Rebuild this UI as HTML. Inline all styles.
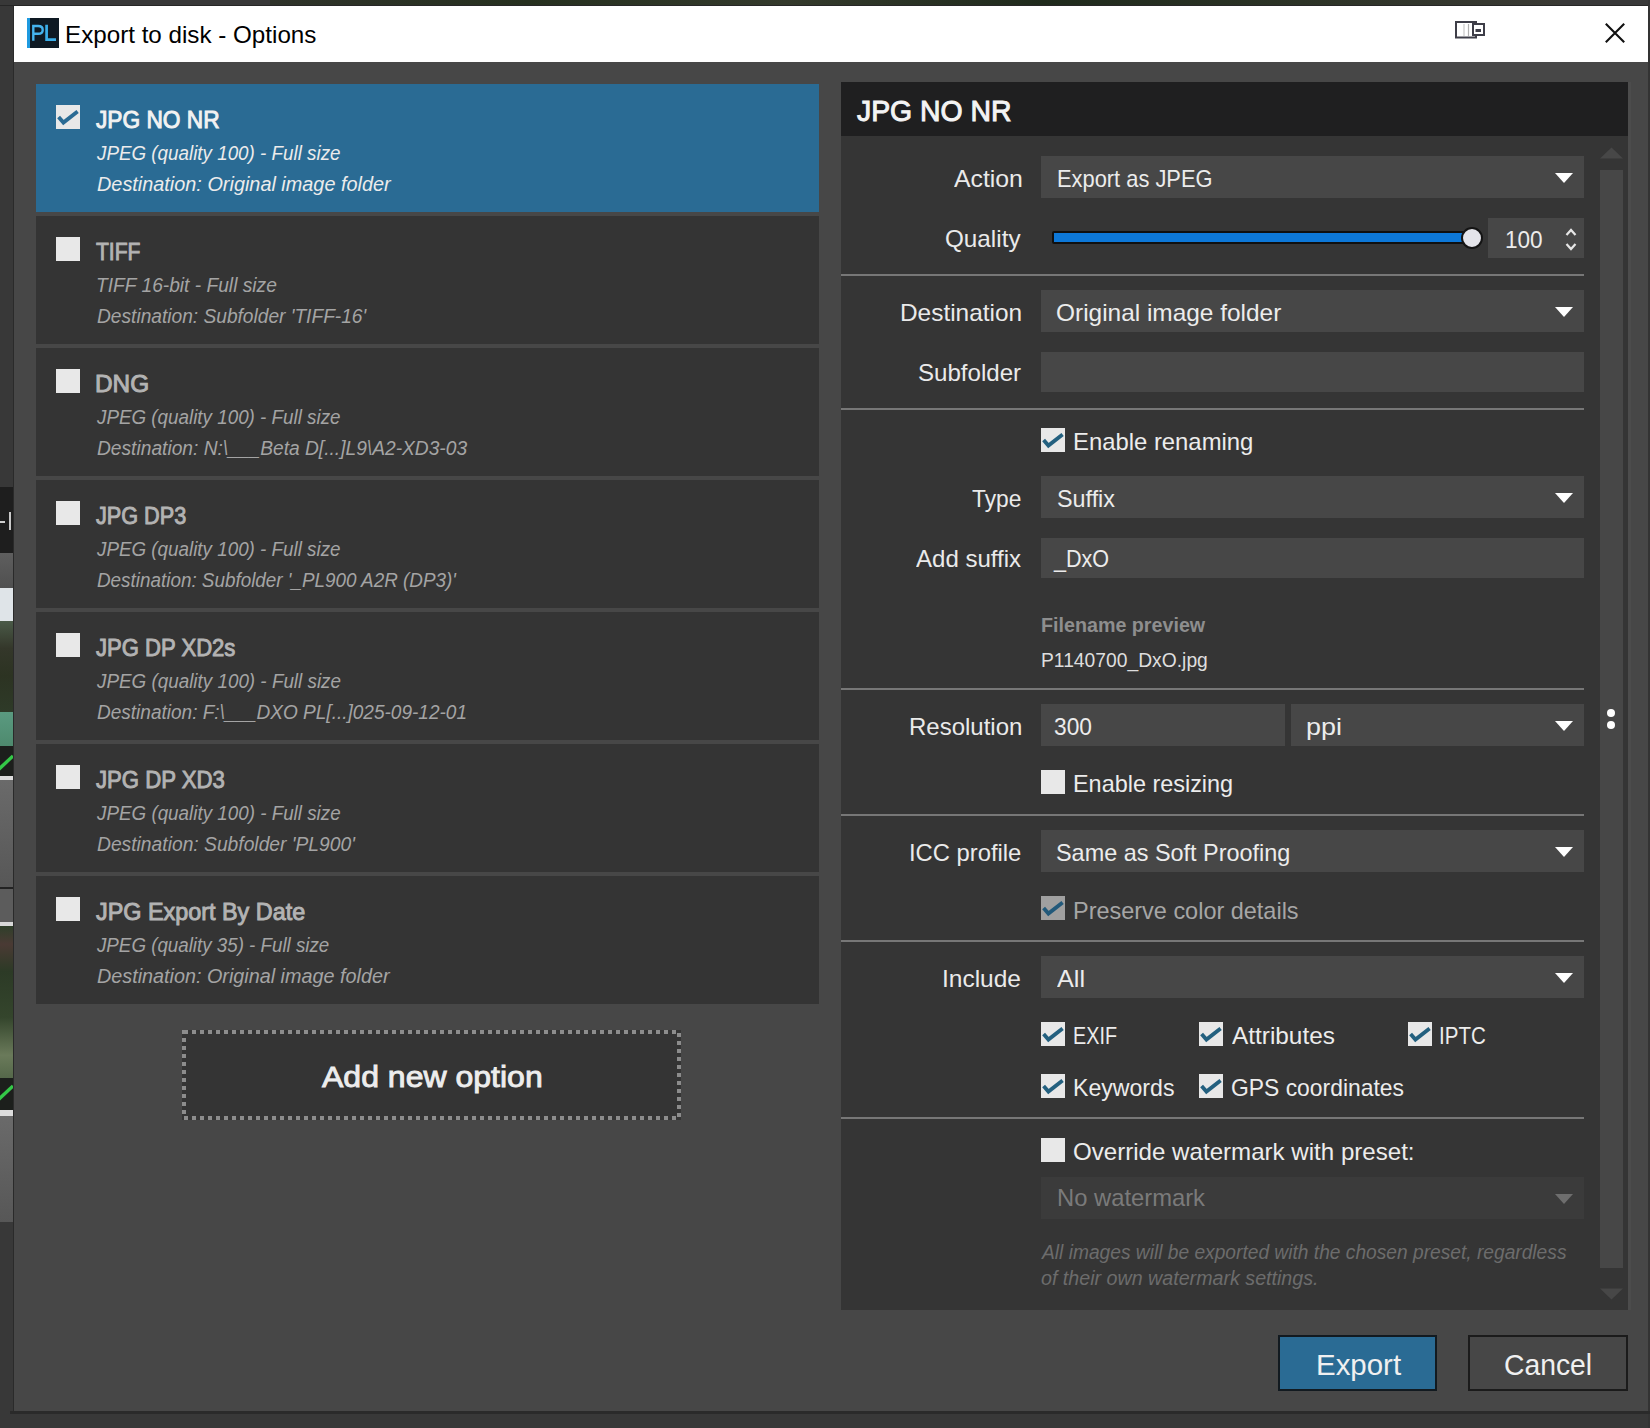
<!DOCTYPE html>
<html><head><meta charset="utf-8"><style>
*{margin:0;padding:0;box-sizing:border-box}
html,body{width:1650px;height:1428px;overflow:hidden;background:#353535;font-family:"Liberation Sans",sans-serif}
.a{position:absolute}
.t{position:absolute;white-space:nowrap;transform-origin:0 0}
</style></head><body>
<div class="a" style="left:0px;top:0px;width:1650px;height:1428px;background:#383838;"></div>
<div class="a" style="left:270px;top:0px;width:1290px;height:6px;background:linear-gradient(90deg,#2f332a,#26301f 20%,#343a2c 40%,#1f2a1c 60%,#2c3326 80%,#3a3a34);"></div>
<div class="a" style="left:0px;top:5px;width:1650px;height:1px;background:#262626;"></div>
<div class="a" style="left:0px;top:487px;width:13px;height:66px;background:#1e1e1e;"></div>
<div class="a" style="left:0px;top:521px;width:5px;height:2px;background:#d0d0d0;"></div>
<div class="a" style="left:9px;top:512px;width:2px;height:18px;background:#c8c8c8;"></div>
<div class="a" style="left:0px;top:553px;width:13px;height:35px;background:linear-gradient(180deg,#5e5e5e,#505050);"></div>
<div class="a" style="left:0px;top:588px;width:13px;height:33px;background:#dfe4e8;"></div>
<div class="a" style="left:0px;top:621px;width:13px;height:91px;background:linear-gradient(180deg,#4a5a48,#34372a 30%,#2c3322 60%,#2e3a28);"></div>
<div class="a" style="left:0px;top:712px;width:13px;height:34px;background:linear-gradient(180deg,#5a9a80,#4e8a6e);"></div>
<div class="a" style="left:0px;top:746px;width:13px;height:30px;background:#1c1f1c;"></div>
<svg class="a" style="left:0;top:746px" width="13" height="30" viewBox="0 0 13 30"><path d="M-2 24 L13 10" stroke="#34c848" stroke-width="3.4" fill="none"/></svg>
<div class="a" style="left:0px;top:776px;width:13px;height:4px;background:#dcdcdc;"></div>
<div class="a" style="left:0px;top:780px;width:13px;height:107px;background:linear-gradient(180deg,#6a6a6a,#575757);"></div>
<div class="a" style="left:0px;top:887px;width:13px;height:2px;background:#222;"></div>
<div class="a" style="left:0px;top:889px;width:13px;height:33px;background:#5c5c5c;"></div>
<div class="a" style="left:0px;top:922px;width:13px;height:4px;background:#d8d8d8;"></div>
<div class="a" style="left:0px;top:926px;width:13px;height:152px;background:linear-gradient(180deg,#2f3f2a,#4a3a34 12%,#2c3a26 30%,#34452c 60%,#6a7a5a 85%,#55684a);"></div>
<div class="a" style="left:0px;top:1078px;width:13px;height:32px;background:#1c1f1c;"></div>
<svg class="a" style="left:0;top:1078px" width="13" height="32" viewBox="0 0 13 32"><path d="M-2 22 L13 8" stroke="#34c848" stroke-width="3.4" fill="none"/></svg>
<div class="a" style="left:0px;top:1110px;width:13px;height:6px;background:#dcdcdc;"></div>
<div class="a" style="left:0px;top:1116px;width:13px;height:106px;background:linear-gradient(180deg,#6a6a6a,#575757);"></div>
<div class="a" style="left:1648px;top:0px;width:2px;height:1428px;background:#333333;"></div>
<div class="a" style="left:13px;top:6px;width:1px;height:1407px;background:#2a2a2a;"></div>
<div class="a" style="left:10px;top:1411px;width:1640px;height:3px;background:#2a2a2a;"></div>
<div class="a" style="left:14px;top:6px;width:1634px;height:56px;background:#ffffff;"></div>
<div class="a" style="left:14px;top:62px;width:1634px;height:1349px;background:#474747;"></div>
<div class="a" style="left:27px;top:18px;width:32px;height:30px;background:#0e1923"></div>
<div class="a" style="left:27px;top:18px;width:3px;height:30px;background:#1e9ae0"></div>
<svg class="a" style="left:27px;top:18px" width="32" height="30" viewBox="0 0 32 30">
<path d="M6.3 22.8 V8 H11.2 Q15.7 8 15.7 11.9 Q15.7 15.8 11.2 15.8 H6.3" fill="none" stroke="#45b3ee" stroke-width="2.4"/>
<path d="M19.6 6.8 V21.7 H29" fill="none" stroke="#3aaeea" stroke-width="2.7"/>
</svg>
<svg class="a" style="left:1450px;top:16px" width="40" height="26" viewBox="0 0 40 26">
<rect x="6" y="6" width="20" height="15.5" fill="#fff" stroke="#3e3e48" stroke-width="2"/>
<line x1="14" y1="8" x2="14" y2="20" stroke="#c8c8c8" stroke-width="1.2"/>
<line x1="18.5" y1="8" x2="18.5" y2="20" stroke="#b0b0b0" stroke-width="1.2"/>
<rect x="23" y="8" width="11" height="11" fill="#fff" stroke="#3e3e48" stroke-width="2"/>
<rect x="25.5" y="13" width="5.5" height="3" fill="#3e3e48"/>
</svg>
<svg class="a" style="left:1600px;top:18px" width="30" height="30" viewBox="0 0 30 30">
<path d="M5.8 5.8 L24.2 24.2 M24.2 5.8 L5.8 24.2" stroke="#111" stroke-width="2.1" fill="none"/>
</svg>
<div class="a" style="left:36px;top:84px;width:783px;height:128px;background:#2a6b94;"></div>
<div class="a" style="left:56px;top:105px;width:24px;height:24px;background:#e8e8e8"></div><svg class="a" style="left:56px;top:105px" width="24" height="24" viewBox="0 0 24 24"><path d="M2.6 12.1 L7.4 17.6 L21.6 6.4" fill="none" stroke="#2a6b94" stroke-width="3.8" stroke-linejoin="miter"/></svg>
<div class="a" style="left:36px;top:216px;width:783px;height:128px;background:#343434;"></div>
<div class="a" style="left:56px;top:237px;width:24px;height:24px;background:#e8e8e8"></div>
<div class="a" style="left:36px;top:348px;width:783px;height:128px;background:#343434;"></div>
<div class="a" style="left:56px;top:369px;width:24px;height:24px;background:#e8e8e8"></div>
<div class="a" style="left:36px;top:480px;width:783px;height:128px;background:#343434;"></div>
<div class="a" style="left:56px;top:501px;width:24px;height:24px;background:#e8e8e8"></div>
<div class="a" style="left:36px;top:612px;width:783px;height:128px;background:#343434;"></div>
<div class="a" style="left:56px;top:633px;width:24px;height:24px;background:#e8e8e8"></div>
<div class="a" style="left:36px;top:744px;width:783px;height:128px;background:#343434;"></div>
<div class="a" style="left:56px;top:765px;width:24px;height:24px;background:#e8e8e8"></div>
<div class="a" style="left:36px;top:876px;width:783px;height:128px;background:#343434;"></div>
<div class="a" style="left:56px;top:897px;width:24px;height:24px;background:#e8e8e8"></div>
<div class="a" style="left:182px;top:1030px;width:499px;height:90px;background:#343434"></div>
<svg class="a" style="left:182px;top:1030px" width="499" height="90" viewBox="0 0 499 90">
<rect x="2" y="2" width="495" height="86" fill="none" stroke="#8c8c8c" stroke-width="4" stroke-dasharray="4 4"/>
</svg>
<div class="a" style="left:841px;top:82px;width:787px;height:1228px;background:#353535;"></div>
<div class="a" style="left:841px;top:82px;width:787px;height:54px;background:#1f1f20;"></div>
<div class="a" style="left:1628px;top:82px;width:3px;height:1228px;background:#4c4c4c;"></div>
<div class="a" style="left:1041px;top:156px;width:543px;height:42px;background:#474747;"></div>
<svg class="a" style="left:1554px;top:172.0px" width="20" height="11" viewBox="0 0 20 11"><path d="M1 1 H19 L10 11 Z" fill="#ffffff"/></svg>
<div class="a" style="left:1052px;top:231px;width:422px;height:13px;background:#101010;border-radius:2px"></div>
<div class="a" style="left:1054px;top:233px;width:418px;height:9px;background:#0d78d8;"></div>
<div class="a" style="left:1461.2px;top:226.5px;width:22px;height:22px;border-radius:50%;background:#e4e4ea;border:2px solid #141414"></div>
<div class="a" style="left:1488px;top:218px;width:96px;height:40px;background:#474747;"></div>
<svg class="a" style="left:1564px;top:226px" width="14" height="28" viewBox="0 0 14 28">
<path d="M2.5 9 L7 4 L11.5 9" fill="none" stroke="#e6e6e6" stroke-width="2.2"/>
<path d="M2.5 18 L7 23 L11.5 18" fill="none" stroke="#e6e6e6" stroke-width="2.2"/>
</svg>
<div class="a" style="left:841px;top:274px;width:743px;height:2px;background:#777777;"></div>
<div class="a" style="left:1041px;top:290px;width:543px;height:42px;background:#474747;"></div>
<svg class="a" style="left:1554px;top:306.0px" width="20" height="11" viewBox="0 0 20 11"><path d="M1 1 H19 L10 11 Z" fill="#ffffff"/></svg>
<div class="a" style="left:1041px;top:352px;width:543px;height:40px;background:#474747;"></div>
<div class="a" style="left:841px;top:408px;width:743px;height:2px;background:#777777;"></div>
<div class="a" style="left:1041px;top:428px;width:24px;height:24px;background:#e8e8e8"></div><svg class="a" style="left:1041px;top:428px" width="24" height="24" viewBox="0 0 24 24"><path d="M2.6 12.1 L7.4 17.6 L21.6 6.4" fill="none" stroke="#23607f" stroke-width="3.8" stroke-linejoin="miter"/></svg>
<div class="a" style="left:1041px;top:476px;width:543px;height:42px;background:#474747;"></div>
<svg class="a" style="left:1554px;top:492.0px" width="20" height="11" viewBox="0 0 20 11"><path d="M1 1 H19 L10 11 Z" fill="#ffffff"/></svg>
<div class="a" style="left:1041px;top:538px;width:543px;height:40px;background:#474747;"></div>
<div class="a" style="left:841px;top:688px;width:743px;height:2px;background:#777777;"></div>
<div class="a" style="left:1041px;top:704px;width:244px;height:42px;background:#474747;"></div>
<div class="a" style="left:1291px;top:704px;width:293px;height:42px;background:#474747;"></div>
<svg class="a" style="left:1554px;top:720.0px" width="20" height="11" viewBox="0 0 20 11"><path d="M1 1 H19 L10 11 Z" fill="#ffffff"/></svg>
<div class="a" style="left:1041px;top:770px;width:24px;height:24px;background:#e8e8e8"></div>
<div class="a" style="left:841px;top:814px;width:743px;height:2px;background:#777777;"></div>
<div class="a" style="left:1041px;top:830px;width:543px;height:42px;background:#474747;"></div>
<svg class="a" style="left:1554px;top:846.0px" width="20" height="11" viewBox="0 0 20 11"><path d="M1 1 H19 L10 11 Z" fill="#ffffff"/></svg>
<div class="a" style="left:1041px;top:896px;width:24px;height:24px;background:#a0a0a0"></div><svg class="a" style="left:1041px;top:896px" width="24" height="24" viewBox="0 0 24 24"><path d="M2.6 12.1 L7.4 17.6 L21.6 6.4" fill="none" stroke="#22597a" stroke-width="3.8" stroke-linejoin="miter"/></svg>
<div class="a" style="left:841px;top:940px;width:743px;height:2px;background:#777777;"></div>
<div class="a" style="left:1041px;top:956px;width:543px;height:42px;background:#474747;"></div>
<svg class="a" style="left:1554px;top:972.0px" width="20" height="11" viewBox="0 0 20 11"><path d="M1 1 H19 L10 11 Z" fill="#ffffff"/></svg>
<div class="a" style="left:1041px;top:1022px;width:24px;height:24px;background:#e8e8e8"></div><svg class="a" style="left:1041px;top:1022px" width="24" height="24" viewBox="0 0 24 24"><path d="M2.6 12.1 L7.4 17.6 L21.6 6.4" fill="none" stroke="#23607f" stroke-width="3.8" stroke-linejoin="miter"/></svg>
<div class="a" style="left:1199px;top:1022px;width:24px;height:24px;background:#e8e8e8"></div><svg class="a" style="left:1199px;top:1022px" width="24" height="24" viewBox="0 0 24 24"><path d="M2.6 12.1 L7.4 17.6 L21.6 6.4" fill="none" stroke="#23607f" stroke-width="3.8" stroke-linejoin="miter"/></svg>
<div class="a" style="left:1408px;top:1022px;width:24px;height:24px;background:#e8e8e8"></div><svg class="a" style="left:1408px;top:1022px" width="24" height="24" viewBox="0 0 24 24"><path d="M2.6 12.1 L7.4 17.6 L21.6 6.4" fill="none" stroke="#23607f" stroke-width="3.8" stroke-linejoin="miter"/></svg>
<div class="a" style="left:1041px;top:1074px;width:24px;height:24px;background:#e8e8e8"></div><svg class="a" style="left:1041px;top:1074px" width="24" height="24" viewBox="0 0 24 24"><path d="M2.6 12.1 L7.4 17.6 L21.6 6.4" fill="none" stroke="#23607f" stroke-width="3.8" stroke-linejoin="miter"/></svg>
<div class="a" style="left:1199px;top:1074px;width:24px;height:24px;background:#e8e8e8"></div><svg class="a" style="left:1199px;top:1074px" width="24" height="24" viewBox="0 0 24 24"><path d="M2.6 12.1 L7.4 17.6 L21.6 6.4" fill="none" stroke="#23607f" stroke-width="3.8" stroke-linejoin="miter"/></svg>
<div class="a" style="left:841px;top:1117px;width:743px;height:2px;background:#777777;"></div>
<div class="a" style="left:1041px;top:1138px;width:24px;height:24px;background:#e8e8e8"></div>
<div class="a" style="left:1041px;top:1177px;width:543px;height:42px;background:#3b3b3b;"></div>
<svg class="a" style="left:1554px;top:1193.0px" width="20" height="11" viewBox="0 0 20 11"><path d="M1 1 H19 L10 11 Z" fill="#6e6e6e"/></svg>
<svg class="a" style="left:1600px;top:147px" width="23" height="12" viewBox="0 0 23 12"><path d="M0 11.5 L11.5 0.5 L23 11.5 Z" fill="#474747"/></svg>
<div class="a" style="left:1600px;top:170px;width:23px;height:1098px;background:#474747;"></div>
<div class="a" style="left:1607px;top:709px;width:8px;height:8px;border-radius:50%;background:#fff"></div>
<div class="a" style="left:1607px;top:721px;width:8px;height:8px;border-radius:50%;background:#fff"></div>
<svg class="a" style="left:1600px;top:1288px" width="23" height="12" viewBox="0 0 23 12"><path d="M0 0.5 L23 0.5 L11.5 11.5 Z" fill="#474747"/></svg>
<div class="a" style="left:1278px;top:1335px;width:159px;height:56px;background:#2a6b94;border:2px solid #121a20"></div>
<div class="a" style="left:1468px;top:1335px;width:160px;height:56px;background:#474747;border:2px solid #1b1b1b"></div>
<div class="t" style="left:64.69px;top:22.78px;font-size:24px;line-height:24px;color:#000000;transform:scaleX(1.0079);">Export to disk - Options</div>
<div class="t" style="left:96.00px;top:108.08px;font-size:24px;line-height:24px;color:#f2f2f2;transform:scaleX(0.9460);-webkit-text-stroke:0.95px #f2f2f2;">JPG NO NR</div>
<div class="t" style="left:97.44px;top:143.37px;font-size:20px;line-height:20px;color:#ececec;font-style:italic;transform:scaleX(0.9402);">JPEG (quality 100) - Full size</div>
<div class="t" style="left:96.50px;top:174.47px;font-size:20px;line-height:20px;color:#ececec;font-style:italic;transform:scaleX(0.9931);">Destination: Original image folder</div>
<div class="t" style="left:96.00px;top:240.08px;font-size:24px;line-height:24px;color:#b3b3b3;transform:scaleX(0.8782);-webkit-text-stroke:0.95px #b3b3b3;">TIFF</div>
<div class="t" style="left:95.54px;top:275.37px;font-size:20px;line-height:20px;color:#a4a4a4;font-style:italic;transform:scaleX(0.9590);">TIFF 16-bit - Full size</div>
<div class="t" style="left:96.50px;top:306.47px;font-size:20px;line-height:20px;color:#a4a4a4;font-style:italic;transform:scaleX(0.9576);">Destination: Subfolder 'TIFF-16'</div>
<div class="t" style="left:94.99px;top:372.08px;font-size:24px;line-height:24px;color:#b3b3b3;transform:scaleX(1.0145);-webkit-text-stroke:0.95px #b3b3b3;">DNG</div>
<div class="t" style="left:97.44px;top:407.37px;font-size:20px;line-height:20px;color:#a4a4a4;font-style:italic;transform:scaleX(0.9405);">JPEG (quality 100) - Full size</div>
<div class="t" style="left:96.50px;top:438.47px;font-size:20px;line-height:20px;color:#a4a4a4;font-style:italic;transform:scaleX(0.9594);">Destination: N:\___Beta D[...]L9\A2-XD3-03</div>
<div class="t" style="left:96.00px;top:504.08px;font-size:24px;line-height:24px;color:#b3b3b3;transform:scaleX(0.9019);-webkit-text-stroke:0.95px #b3b3b3;">JPG DP3</div>
<div class="t" style="left:97.44px;top:539.37px;font-size:20px;line-height:20px;color:#a4a4a4;font-style:italic;transform:scaleX(0.9405);">JPEG (quality 100) - Full size</div>
<div class="t" style="left:96.50px;top:570.47px;font-size:20px;line-height:20px;color:#a4a4a4;font-style:italic;transform:scaleX(0.9433);">Destination: Subfolder '_PL900 A2R (DP3)'</div>
<div class="t" style="left:96.00px;top:636.08px;font-size:24px;line-height:24px;color:#b3b3b3;transform:scaleX(0.9195);-webkit-text-stroke:0.95px #b3b3b3;">JPG DP XD2s</div>
<div class="t" style="left:97.44px;top:671.37px;font-size:20px;line-height:20px;color:#a4a4a4;font-style:italic;transform:scaleX(0.9421);">JPEG (quality 100) - Full size</div>
<div class="t" style="left:96.50px;top:702.47px;font-size:20px;line-height:20px;color:#a4a4a4;font-style:italic;transform:scaleX(0.9508);">Destination: F:\___DXO PL[...]025-09-12-01</div>
<div class="t" style="left:96.00px;top:768.08px;font-size:24px;line-height:24px;color:#b3b3b3;transform:scaleX(0.9227);-webkit-text-stroke:0.95px #b3b3b3;">JPG DP XD3</div>
<div class="t" style="left:97.44px;top:803.37px;font-size:20px;line-height:20px;color:#a4a4a4;font-style:italic;transform:scaleX(0.9409);">JPEG (quality 100) - Full size</div>
<div class="t" style="left:96.50px;top:834.47px;font-size:20px;line-height:20px;color:#a4a4a4;font-style:italic;transform:scaleX(0.9628);">Destination: Subfolder 'PL900'</div>
<div class="t" style="left:96.00px;top:900.08px;font-size:24px;line-height:24px;color:#b3b3b3;transform:scaleX(0.9739);-webkit-text-stroke:0.95px #b3b3b3;">JPG Export By Date</div>
<div class="t" style="left:97.44px;top:935.37px;font-size:20px;line-height:20px;color:#a4a4a4;font-style:italic;transform:scaleX(0.9372);">JPEG (quality 35) - Full size</div>
<div class="t" style="left:96.50px;top:966.47px;font-size:20px;line-height:20px;color:#a4a4a4;font-style:italic;transform:scaleX(0.9891);">Destination: Original image folder</div>
<div class="t" style="left:322.00px;top:1062.20px;font-size:30px;line-height:30px;color:#ededed;transform:scaleX(1.0671);-webkit-text-stroke:0.90px #ededed;">Add new option</div>
<div class="t" style="left:857.10px;top:96.00px;font-size:30px;line-height:30px;color:#f4f4f4;transform:scaleX(0.9460);-webkit-text-stroke:1.00px #f4f4f4;">JPG NO NR</div>
<div class="t" style="left:953.50px;top:167.28px;font-size:24px;line-height:24px;color:#eaeaea;transform:scaleX(1.0328);">Action</div>
<div class="t" style="left:945.49px;top:227.28px;font-size:24px;line-height:24px;color:#eaeaea;transform:scaleX(1.0109);">Quality</div>
<div class="t" style="left:900.28px;top:300.98px;font-size:24px;line-height:24px;color:#eaeaea;transform:scaleX(1.0168);">Destination</div>
<div class="t" style="left:917.90px;top:361.28px;font-size:24px;line-height:24px;color:#eaeaea;transform:scaleX(1.0035);">Subfolder</div>
<div class="t" style="left:972.00px;top:486.98px;font-size:24px;line-height:24px;color:#eaeaea;transform:scaleX(0.9481);">Type</div>
<div class="t" style="left:915.90px;top:547.28px;font-size:24px;line-height:24px;color:#eaeaea;transform:scaleX(1.0014);">Add suffix</div>
<div class="t" style="left:909.00px;top:714.78px;font-size:24px;line-height:24px;color:#eaeaea;transform:scaleX(0.9995);">Resolution</div>
<div class="t" style="left:909.02px;top:840.78px;font-size:24px;line-height:24px;color:#eaeaea;transform:scaleX(0.9908);">ICC profile</div>
<div class="t" style="left:942.36px;top:966.78px;font-size:24px;line-height:24px;color:#eaeaea;transform:scaleX(1.0207);">Include</div>
<div class="t" style="left:1056.59px;top:167.28px;font-size:24px;line-height:24px;color:#ececec;transform:scaleX(0.9110);">Export as JPEG</div>
<div class="t" style="left:1505.06px;top:227.58px;font-size:24px;line-height:24px;color:#ececec;transform:scaleX(0.9407);">100</div>
<div class="t" style="left:1056.48px;top:301.28px;font-size:24px;line-height:24px;color:#ececec;transform:scaleX(1.0175);">Original image folder</div>
<div class="t" style="left:1073.01px;top:430.28px;font-size:24px;line-height:24px;color:#ececec;transform:scaleX(0.9938);">Enable renaming</div>
<div class="t" style="left:1056.73px;top:486.98px;font-size:24px;line-height:24px;color:#ececec;transform:scaleX(0.9729);">Suffix</div>
<div class="t" style="left:1053.50px;top:547.28px;font-size:24px;line-height:24px;color:#ececec;transform:scaleX(0.8982);">_DxO</div>
<div class="t" style="left:1040.99px;top:615.59px;font-size:19.5px;line-height:19.5px;color:#8e8e8e;font-weight:bold;transform:scaleX(1.0098);">Filename preview</div>
<div class="t" style="left:1041.01px;top:650.79px;font-size:19.5px;line-height:19.5px;color:#dedede;transform:scaleX(0.9885);">P1140700_DxO.jpg</div>
<div class="t" style="left:1053.70px;top:714.78px;font-size:24px;line-height:24px;color:#ececec;transform:scaleX(0.9472);">300</div>
<div class="t" style="left:1306.28px;top:714.78px;font-size:24px;line-height:24px;color:#ececec;transform:scaleX(1.1214);">ppi</div>
<div class="t" style="left:1073.02px;top:772.08px;font-size:24px;line-height:24px;color:#ececec;transform:scaleX(0.9756);">Enable resizing</div>
<div class="t" style="left:1056.02px;top:840.78px;font-size:24px;line-height:24px;color:#ececec;transform:scaleX(0.9757);">Same as Soft Proofing</div>
<div class="t" style="left:1073.02px;top:898.88px;font-size:24px;line-height:24px;color:#a6a6a6;transform:scaleX(0.9775);">Preserve color details</div>
<div class="t" style="left:1057.00px;top:966.78px;font-size:24px;line-height:24px;color:#ececec;transform:scaleX(1.0497);">All</div>
<div class="t" style="left:1072.98px;top:1023.88px;font-size:24px;line-height:24px;color:#ececec;transform:scaleX(0.8242);">EXIF</div>
<div class="t" style="left:1231.60px;top:1023.88px;font-size:24px;line-height:24px;color:#ececec;transform:scaleX(1.0150);">Attributes</div>
<div class="t" style="left:1438.99px;top:1023.88px;font-size:24px;line-height:24px;color:#ececec;transform:scaleX(0.8560);">IPTC</div>
<div class="t" style="left:1073.04px;top:1075.88px;font-size:24px;line-height:24px;color:#ececec;transform:scaleX(0.9629);">Keywords</div>
<div class="t" style="left:1230.65px;top:1075.88px;font-size:24px;line-height:24px;color:#ececec;transform:scaleX(0.9533);">GPS coordinates</div>
<div class="t" style="left:1072.60px;top:1139.68px;font-size:24px;line-height:24px;color:#ececec;transform:scaleX(1.0043);">Override watermark with preset:</div>
<div class="t" style="left:1057.41px;top:1186.28px;font-size:24px;line-height:24px;color:#7a7a7a;transform:scaleX(0.9908);">No watermark</div>
<div class="t" style="left:1041.96px;top:1242.27px;font-size:20px;line-height:20px;color:#6c6c6c;font-style:italic;transform:scaleX(0.9589);">All images will be exported with the chosen preset, regardless</div>
<div class="t" style="left:1041.00px;top:1267.67px;font-size:20px;line-height:20px;color:#6c6c6c;font-style:italic;transform:scaleX(0.9830);">of their own watermark settings.</div>
<div class="t" style="left:1315.60px;top:1349.62px;font-size:29.5px;line-height:29.5px;color:#f0f0f0;transform:scaleX(0.9980);">Export</div>
<div class="t" style="left:1504.34px;top:1349.62px;font-size:29.5px;line-height:29.5px;color:#f0f0f0;transform:scaleX(0.9600);">Cancel</div>
</body></html>
